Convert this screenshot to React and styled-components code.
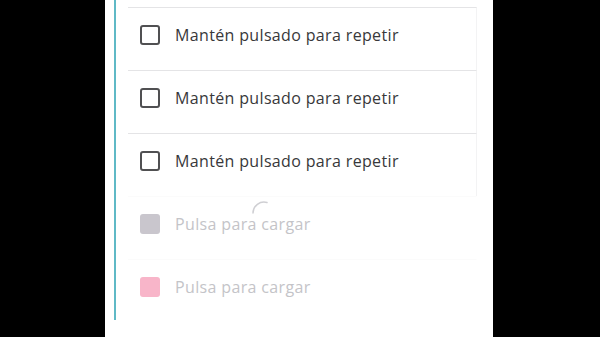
import styled, { createGlobalStyle } from "styled-components";

const Global = createGlobalStyle`
  html, body {
    margin: 0;
    padding: 0;
    background: #000;
  }
  body {
    font-family: "Open Sans", Lato, sans-serif;
  }
`;

const Page = styled.div`
  display: flex;
  width: 600px;
  height: 337px;
  background: #000;
  overflow: hidden;
`;

const Panel = styled.div`
  margin-left: 105px;
  width: 388px;
  height: 337px;
  background: #fff;
  padding-left: 9px;
  box-sizing: border-box;
`;

const Rail = styled.div`
  position: relative;
  height: 320px;
  box-sizing: border-box;
  border-left: 2px solid #5fb9c6;
  padding: 7px 16px 0 12px;
`;

const List = styled.ul`
  list-style: none;
  margin: 0;
  padding: 0;
`;

const Row = styled.li`
  display: flex;
  align-items: center;
  gap: 15px;
  height: 63px;
  padding: 0 0 8px 12px;
  box-sizing: border-box;
  border-top: 1px solid ${({ $faded }) => ($faded ? "#fbfbfb" : "#e4e4e6")};
  border-right: 1px solid ${({ $faded }) => ($faded ? "transparent" : "#f3f3f4")};
`;

const Box = styled.span`
  flex: none;
  width: 20px;
  height: 20px;
  box-sizing: border-box;
  border-radius: 3px;
  border: ${({ $fill }) => ($fill ? "none" : "2px solid #505052")};
  background: ${({ $fill }) => $fill || "#fff"};
`;

const Label = styled.span`
  font-size: 16px;
  letter-spacing: 0.35px;
  color: ${({ $faded }) => ($faded ? "#c4c4c8" : "#38383a")};
`;

const Spinner = styled.svg`
  position: absolute;
  left: 133px;
  top: 199px;
`;

const items = [
  { text: "Mantén pulsado para repetir" },
  { text: "Mantén pulsado para repetir" },
  { text: "Mantén pulsado para repetir" },
  { text: "Pulsa para cargar", fill: "#c9c6cd", faded: true },
  { text: "Pulsa para cargar", fill: "#f8b5c9", faded: true },
];

export default function App() {
  return (
    <>
      <Global />
      <Page>
        <Panel>
          <Rail>
            <List>
              {items.map((it, i) => (
                <Row key={i} $faded={it.faded}>
                  <Box $fill={it.fill} />
                  <Label $faded={it.faded}>{it.text}</Label>
                </Row>
              ))}
            </List>
            <Spinner width="28" height="28" viewBox="0 0 28 28">
              <path
                d="M4 14 A11 11 0 0 1 18 3.5"
                fill="none"
                stroke="#cfcfd3"
                strokeWidth="1.5"
                strokeLinecap="round"
              />
            </Spinner>
          </Rail>
        </Panel>
      </Page>
    </>
  );
}
